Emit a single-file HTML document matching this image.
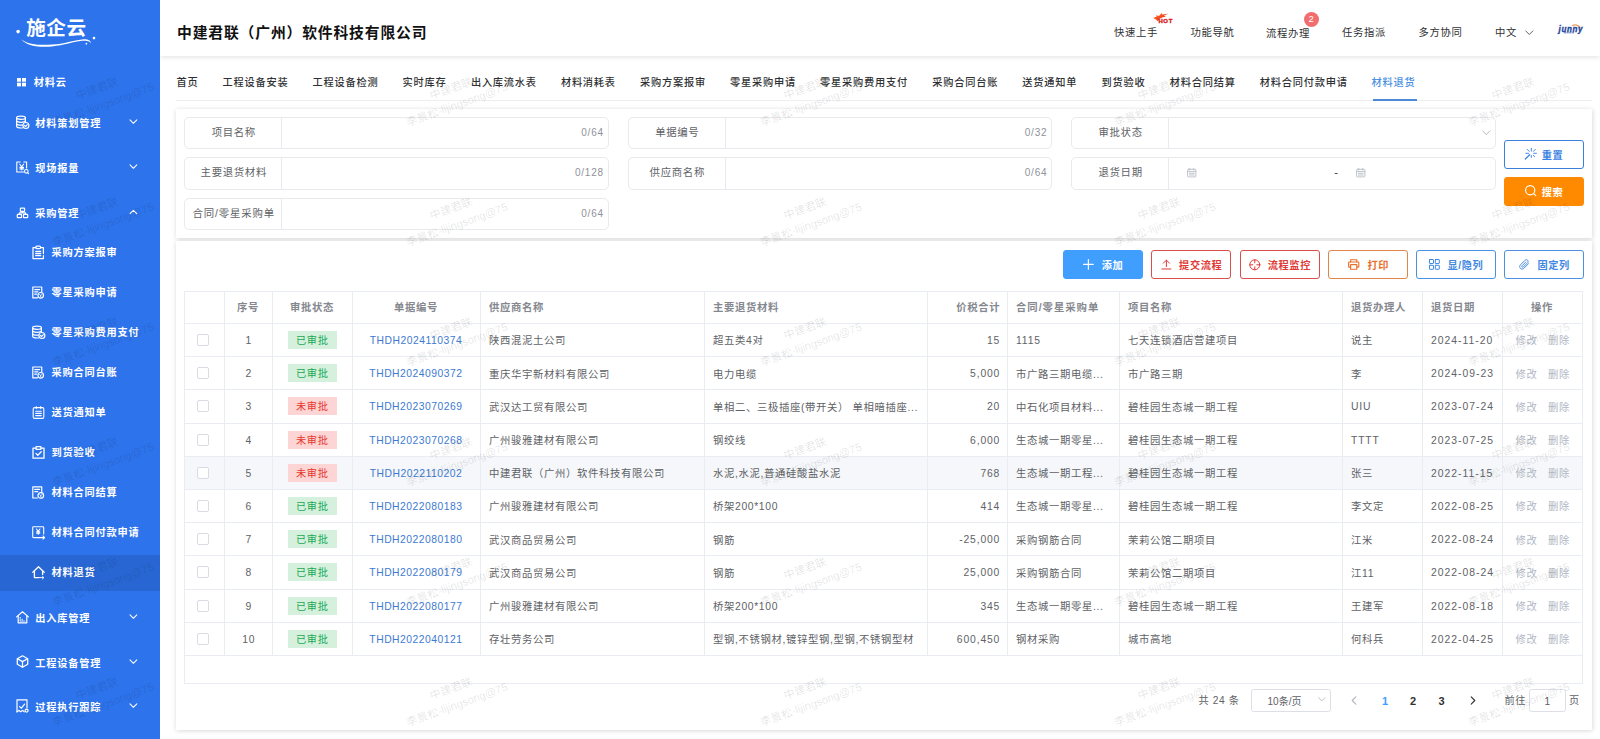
<!DOCTYPE html>
<html lang="zh-CN">
<head>
<meta charset="utf-8">
<title>材料退货</title>
<style>
*{box-sizing:border-box;margin:0;padding:0}
html,body{width:1600px;height:739px;overflow:hidden;background:#fff}
body{position:relative;font-family:"Liberation Sans","Noto Sans CJK SC",sans-serif;font-size:10.2px;letter-spacing:.63px;color:#606266;line-height:1}
.abs{position:absolute}
svg{display:block;overflow:visible}

/* ---------- sidebar ---------- */
#side{position:absolute;left:0;top:0;width:160px;height:739px;background:#2d73eb;overflow:hidden;color:#fff;font-weight:700;letter-spacing:.82px}
#side .it{position:absolute;left:0;width:160px;height:35px;line-height:36px;white-space:nowrap}
#side .it.on{background:#2867d3;height:36px}
#side .it svg{position:absolute}
#side .t0{position:absolute;left:33.8px}
#side .t1{position:absolute;left:35.3px}
#side .t2{position:absolute;left:51.5px}
#side svg.si{left:16px;top:10px}
#side svg.si2{left:32px;top:10.8px}
#side svg.ar{left:128.5px;top:13.5px}
#logo{position:absolute;left:0;top:0}

/* ---------- header ---------- */
#head{position:absolute;left:160px;top:0;width:1440px;height:56px;background:#fff;box-shadow:0 1px 5px rgba(0,21,41,.13)}
#title{position:absolute;left:17px;top:1px;height:64px;line-height:64px;font-size:14.8px;letter-spacing:.85px;font-weight:700;color:#111;white-space:nowrap}
.nav{position:absolute;height:65px;line-height:65px;font-size:10.35px;letter-spacing:.65px;color:#303133;white-space:nowrap}
#head svg{position:absolute}
#badge{position:absolute;left:1144px;top:12px;width:14.5px;height:14.5px;border-radius:8px;background:#f26d6d;color:#fff;font-size:9.5px;letter-spacing:0;line-height:14.5px;text-align:center}

/* ---------- tabs ---------- */
#tabs{position:absolute;left:176px;top:64px;width:1416px;height:37px;border-bottom:1px solid #edeef1;white-space:nowrap;font-weight:500;color:#303133;letter-spacing:.8px}
#tabs span{position:absolute;top:0;height:38.5px;line-height:38.5px}
#tabs span.on{color:#4a90e2}
#tabs i{position:absolute;top:34.8px;width:44.5px;height:2px;background:#4b8bd6}

/* ---------- cards ---------- */
.card{position:absolute;left:176px;width:1416px;background:#fff;box-shadow:0 1px 5px rgba(0,0,0,.13),2px 0 5px rgba(0,0,0,.04)}
#fcard{top:109px;height:128.5px}
#tcard{top:241px;height:489px}

.grp{position:absolute;width:424.5px;height:31px;border:1px solid #e9eaee;border-radius:5px;background:#fff}
.grp .lb{position:absolute;left:0;top:0;width:97px;height:29px;line-height:29px;text-align:center;border-right:1px solid #e9eaee;color:#606266;white-space:nowrap;font-size:10.4px;letter-spacing:.68px;text-indent:1.6px}
.grp .ct{position:absolute;right:3.6px;top:0;height:29px;line-height:29px;font-size:10px;color:#8f9299;letter-spacing:.8px}
.grp svg{position:absolute}
.grp .dash{position:absolute;left:262.5px;top:0;line-height:28px;color:#303133;font-size:11px}

.btn{position:absolute;width:80px;height:29px;border-radius:3px;border:1px solid;display:flex;align-items:center;justify-content:center;font-weight:700;white-space:nowrap;background:#fff}
.btn svg{margin-right:7.5px;flex:none}
.btn span{position:relative;top:1.2px;margin-right:-.63px}
.b-reset{border-color:#3a7fdc;color:#3a82e4}
.b-reset svg{margin-right:5px;position:relative;top:-1px}
.b-search{border-color:#ff8a00;background:#ff8a00;color:#fff}
.b-search svg{margin-right:5px;position:relative;top:-1.1px}
.b-add{border-color:#409eff;background:#409eff;color:#fff}
.b-red{border-color:#d9504b;color:#e03a35}
.b-org{border-color:#e08548;color:#e8722c}
.b-org svg{margin-right:8.5px;margin-left:.5px}
.b-blue{border-color:#4a90e2;color:#3f88e2}

/* ---------- table ---------- */
#tb{position:absolute;left:8px;top:50px;width:1399px;height:392.5px}
#tb .vl{position:absolute;top:0;width:1px;height:364px;background:#e9ecf3}
#tb .hl{position:absolute;left:0;width:1399px;height:1px;background:#e9ecf3}
#tb .row{position:absolute;left:0;width:1398px;height:33.2px}
#tb .row.hv{background:#f5f7fa}
#tb .c{position:absolute;top:0;height:100%;font-size:10.35px;letter-spacing:.65px;display:flex;align-items:center;white-space:nowrap;overflow:hidden;padding:2px 9px 0}
#tb .c.cr{padding-right:6.8px}
#tb .hd{font-weight:700;color:#85888f}
#tb .k{padding-top:3px}
#tb .hd .k{padding-top:2px}
#tb .n{letter-spacing:.85px}
#tb .d{letter-spacing:1px}
.cc{justify-content:center}
.cr{justify-content:flex-end}
.tag{display:inline-block;width:49px;height:18px;line-height:19.5px;margin-top:-2px;text-align:center;font-size:10.2px;letter-spacing:.63px;text-indent:.5px;font-weight:400}
.tg{background:#d5f1dd;color:#19a955}
.tr{background:#fdd5d5;color:#e8362c}
.lk{color:#3d7ad0;letter-spacing:.5px}
.op{color:#b0b7c4}
.cb{display:block;width:12px;height:12px;position:relative;left:-1px;top:-1px;border:1px solid #d9dce3;border-radius:2px;background:#fff}

/* ---------- pagination ---------- */
#tcard>svg{position:absolute}
.pg{position:absolute;top:449.2px;height:22px;line-height:22px;white-space:nowrap;color:#606266}
.pn{position:absolute;top:448.6px;width:20px;height:22px;line-height:22px;text-align:center;font-weight:700;font-size:11px;letter-spacing:0}
.pbox{position:absolute;top:448px;height:22.5px;border:1px solid #dcdfe6;border-radius:2.5px;line-height:23px;text-align:center;color:#606266;letter-spacing:0}
.pbox svg{position:absolute}

/* ---------- watermark ---------- */
.wm{position:absolute;width:180px;text-align:center;transform:rotate(-20deg);color:rgba(0,0,0,.115);font-size:11.1px;line-height:16.5px;height:33px;pointer-events:none;white-space:nowrap;font-weight:400;letter-spacing:0}

</style>
</head>
<body>
<div id="head">
<div id="title">中建君联（广州）软件科技有限公司</div>
<div class="nav" style="left:954px;top:0px">快速上手</div>
<div class="nav" style="left:1030.5px;top:0px">功能导航</div>
<div class="nav" style="left:1106px;top:1px">流程办理</div>
<div class="nav" style="left:1182px;top:0px">任务指派</div>
<div class="nav" style="left:1258.5px;top:0px">多方协同</div>
<div class="nav" style="left:1335px;top:0px">中文</div>
<svg style="left:990px;top:10px" width="26" height="15" viewBox="0 0 26 15"><defs><linearGradient id="hg" x1="0" y1="0" x2="1" y2="1"><stop offset="0" stop-color="#ff7a2e"/><stop offset="1" stop-color="#e81a0c"/></linearGradient></defs><path d="M3.260 7.890L6.700 6.400L6.100 5.200L9 5.900L11.660 3.120L12.300 4.600L18.150 3.770L13.900 5.700L15.990 6.640L12.700 7.200L9.600 8.800L7.870 11.240Q6.300 9.300 3.260 7.890Z" fill="url(#hg)"/><text x="8.400" y="12.950" textLength="14.600" lengthAdjust="spacingAndGlyphs" font-family="'Liberation Sans',sans-serif" font-weight="700" font-size="5.400" fill="#d8201e" stroke="#d8201e" stroke-width=".35">HOT</text></svg>
<div id="badge">2</div>
<svg style="left:1364.500px;top:29.500px" width="9" height="6" viewBox="0 0 9 6" fill="none" stroke="#606266" stroke-width="1" stroke-linecap="round" stroke-linejoin="round"><path d="M.7.900l3.600 3.600L7.900.9"/></svg>
<svg style="left:1396px;top:22px" width="30" height="14" viewBox="0 0 30 14"><path d="M16.500 3.600C19 2.200 22.500 3 24.200 5.900" fill="none" stroke="#ee9a5c" stroke-width="1.100" stroke-linecap="round"/><text x="2.600" y="9.800" textLength="24.400" lengthAdjust="spacingAndGlyphs" font-family="'Liberation Sans',sans-serif" font-weight="700" font-style="italic" font-size="8.600" fill="#23469a" stroke="#23469a" stroke-width=".35">junny</text><path d="M7.800 10.800h10.800" stroke="#3f62b0" stroke-width=".9" stroke-dasharray="2.200 .5" fill="none"/></svg>
</div>
<div id="tabs">
<span style="left:0.5px">首页</span>
<span style="left:46.6px">工程设备安装</span>
<span style="left:136.6px">工程设备检测</span>
<span style="left:226.6px">实时库存</span>
<span style="left:294.9px">出入库流水表</span>
<span style="left:384.9px">材料消耗表</span>
<span style="left:464.1px">采购方案报审</span>
<span style="left:554.1px">零星采购申请</span>
<span style="left:644.1px">零星采购费用支付</span>
<span style="left:756.3px">采购合同台账</span>
<span style="left:846.3px">送货通知单</span>
<span style="left:925.5px">到货验收</span>
<span style="left:993.8px">材料合同结算</span>
<span style="left:1083.8px">材料合同付款申请</span>
<span class="on" style="left:1195.5px">材料退货</span>
<i style="left:1196.5px"></i>
</div>
<div class="card" id="fcard">
<div class="grp" style="left:8px;top:8px;height:32px;width:424.5px"><div class="lb" style="height:30px;line-height:29px">项目名称</div><div class="ct">0/64</div></div>
<div class="grp" style="left:8px;top:48px;height:33px;width:424.5px"><div class="lb" style="height:31px;line-height:30px">主要退货材料</div><div class="ct">0/128</div></div>
<div class="grp" style="left:8px;top:89px;height:32px;width:424.5px"><div class="lb" style="height:30px;line-height:29px"><span style="letter-spacing:.85px">合同/零星采购单</span></div><div class="ct">0/64</div></div>
<div class="grp" style="left:451.5px;top:8px;height:32px;width:424.5px"><div class="lb" style="height:30px;line-height:29px">单据编号</div><div class="ct">0/32</div></div>
<div class="grp" style="left:451.5px;top:48px;height:33px;width:424.5px"><div class="lb" style="height:31px;line-height:30px">供应商名称</div><div class="ct">0/64</div></div>
<div class="grp" style="left:894.8px;top:8px;height:32px;width:425.7px"><div class="lb" style="height:30px;line-height:29px">审批状态</div><svg style="left:410px;top:11.800px" width="9" height="6" viewBox="0 0 9 6" fill="none" stroke="#b4b8c0" stroke-width="1" stroke-linecap="round" stroke-linejoin="round"><path d="M.7.900l3.600 3.600L7.900.9"/></svg></div>
<div class="grp" style="left:894.8px;top:48px;height:33px;width:425.7px"><div class="lb" style="height:31px;line-height:30px">退货日期</div><svg style="left:115.500px;top:9.500px" width="9.5" height="9.5" viewBox="0 0 9.5 9.5" fill="none" stroke="#b9bdc6" stroke-width="0.9" stroke-linecap="round" stroke-linejoin="round"><rect x=".6" y="1.300" width="8.300" height="7.600" rx=".8"/><path d="M.6 3.600h8.300M2.800.5v1.600M6.700.5v1.600M2.400 5.300h4.800M2.400 7h4.800" /></svg><div class="dash">-</div><svg style="left:284.500px;top:9.500px" width="9.5" height="9.5" viewBox="0 0 9.5 9.5" fill="none" stroke="#b9bdc6" stroke-width="0.9" stroke-linecap="round" stroke-linejoin="round"><rect x=".6" y="1.300" width="8.300" height="7.600" rx=".8"/><path d="M.6 3.600h8.300M2.800.5v1.600M6.700.5v1.600M2.400 5.300h4.800M2.400 7h4.800" /></svg></div>
<div class="btn b-reset" style="left:1328px;top:31px"><svg width="11.5" height="11.5" viewBox="0 0 11.5 11.5" fill="none" stroke="currentColor" stroke-width="1" stroke-linecap="round" stroke-linejoin="round"><path d="M.3 11l4.400-4.300" stroke-width="1.200"/><path d="M6.300.3v2.800M.9 5.300h2.800M8.700 5.300h2.700M2.200 1.400l2 2M10.400 1.400l-2 2M9.600 8.700L8.300 7.400M6.300 7.500v1.900" stroke-width=".95"/></svg><span>重置</span></div>
<div class="btn b-search" style="left:1328px;top:68px"><svg width="11.5" height="11.5" viewBox="0 0 11.5 11.5" fill="none" stroke="currentColor" stroke-width="1.15" stroke-linecap="round" stroke-linejoin="round"><circle cx="5.200" cy="5.200" r="4.600"/><path d="M8.600 8.600l2.200 2.100"/></svg><span>搜索</span></div>
</div>
<div class="card" id="tcard">
<div class="btn b-add" style="left:887px;top:9px"><svg width="10.8" height="10.8" viewBox="0 0 10.8 10.8" fill="none" stroke="currentColor" stroke-width="1.2" stroke-linecap="round" stroke-linejoin="round"><path d="M5.400.6v9.600M.6 5.400h9.600"/></svg><span>添加</span></div>
<div class="btn b-red" style="left:975.25px;top:9px"><svg width="10.8" height="10.8" viewBox="0 0 10.8 10.8" fill="none" stroke="currentColor" stroke-width="1" stroke-linecap="round" stroke-linejoin="round"><path d="M.9 10h9M5.400 7.600V1.200M2.300 4.200l3.100-3.100 3.100 3.100"/></svg><span>提交流程</span></div>
<div class="btn b-red" style="left:1063.5px;top:9px"><svg width="11.6" height="11.6" viewBox="0 0 11.6 11.6" fill="none" stroke="currentColor" stroke-width="1" stroke-linecap="round" stroke-linejoin="round"><circle cx="5.800" cy="5.800" r="5"/><path d="M5.800.8v3M5.800 7.800v3M.8 5.800h3M7.800 5.800h3"/></svg><span>流程监控</span></div>
<div class="btn b-org" style="left:1151.75px;top:9px"><svg width="11.4" height="11" viewBox="0 0 11.4 11" fill="none" stroke="currentColor" stroke-width="1.15" stroke-linecap="round" stroke-linejoin="round"><path d="M2.600 3V.7h6.200V3"/><path d="M2.600 8.200H1.200c-.4 0-.6-.3-.6-.6V3.700c0-.4.300-.7.600-.7h9c.4 0 .6.300.6.700v3.900c0 .3-.2.600-.6.600H8.800"/><rect x="2.600" y="5.600" width="6.200" height="4.700"/></svg><span>打印</span></div>
<div class="btn b-blue" style="left:1240px;top:9px"><svg width="10.8" height="10.8" viewBox="0 0 10.8 10.8" fill="none" stroke="currentColor" stroke-width="1" stroke-linecap="round" stroke-linejoin="round"><rect x=".5" y=".5" width="4" height="4" rx=".4"/><rect x="6.300" y=".5" width="4" height="4" rx=".4"/><rect x=".5" y="6.300" width="4" height="4" rx=".4"/><rect x="6.300" y="6.300" width="4" height="4" rx=".4"/></svg><span>显/隐列</span></div>
<div class="btn b-blue" style="left:1328.25px;top:9px"><svg width="10.8" height="10.8" viewBox="0 0 10.8 10.8" fill="none" stroke="currentColor" stroke-width="0.95" stroke-linecap="round" stroke-linejoin="round"><path d="M10.200 4.400L5.500 9.100c-1 1-2.600 1-3.500.1-1-1-.9-2.500 0-3.500L6.700 1c.7-.7 1.800-.7 2.500 0 .7.700.7 1.800 0 2.500L4.900 7.800c-.35.350-.9.350-1.250 0-.35-.35-.35-.9 0-1.250l3.700-3.700" transform="translate(-.6,.2)"/></svg><span>固定列</span></div>
<div id="tb">
<div class="row hd" style="top:0.5px;height:32px">
<div class="c cc k" style="left:0px;width:40px"></div>
<div class="c cc k" style="left:40px;width:48px">序号</div>
<div class="c cc k" style="left:88px;width:80px">审批状态</div>
<div class="c cc k" style="left:168px;width:128px">单据编号</div>
<div class="c  k" style="left:296px;width:224px">供应商名称</div>
<div class="c  k" style="left:520px;width:223px">主要退货材料</div>
<div class="c cr k" style="left:743px;width:80px">价税合计</div>
<div class="c  k" style="left:823px;width:112px"><span style="letter-spacing:1px">合同/零星采购单</span></div>
<div class="c  k" style="left:935px;width:223px">项目名称</div>
<div class="c  k" style="left:1158px;width:80px">退货办理人</div>
<div class="c  k" style="left:1238px;width:80px">退货日期</div>
<div class="c cc k" style="left:1318px;width:80px">操作</div>
</div>
<div class="row" style="top:32.5px">
<div class="c cc" style="left:0px;width:40px"><span class="cb"></span></div>
<div class="c cc n" style="left:40px;width:48px"><span style="margin-left:1.6px">1</span></div>
<div class="c cc" style="left:88px;width:80px"><span class="tag tg">已审批</span></div>
<div class="c cc" style="left:168px;width:128px"><span class="lk">THDH2024110374</span></div>
<div class="c k" style="left:296px;width:224px">陕西混泥土公司</div>
<div class="c k" style="left:520px;width:223px">超五类4对</div>
<div class="c cr n" style="left:743px;width:80px">15</div>
<div class="c n" style="left:823px;width:112px">1115</div>
<div class="c k" style="left:935px;width:223px">七天连锁酒店营建项目</div>
<div class="c k" style="left:1158px;width:80px">说主</div>
<div class="c d" style="left:1238px;width:80px">2024-11-20</div>
<div class="c cc k" style="left:1318px;width:80px"><span class="op" style="margin-left:1.5px">修改</span><span class="op" style="margin-left:10.6px">删除</span></div>
</div>
<div class="row" style="top:65.7px">
<div class="c cc" style="left:0px;width:40px"><span class="cb"></span></div>
<div class="c cc n" style="left:40px;width:48px"><span style="margin-left:1.6px">2</span></div>
<div class="c cc" style="left:88px;width:80px"><span class="tag tg">已审批</span></div>
<div class="c cc" style="left:168px;width:128px"><span class="lk">THDH2024090372</span></div>
<div class="c k" style="left:296px;width:224px">重庆华宇新材料有限公司</div>
<div class="c k" style="left:520px;width:223px">电力电缆</div>
<div class="c cr n" style="left:743px;width:80px">5,000</div>
<div class="c k" style="left:823px;width:112px">市广路三期电缆...</div>
<div class="c k" style="left:935px;width:223px">市广路三期</div>
<div class="c k" style="left:1158px;width:80px">李</div>
<div class="c d" style="left:1238px;width:80px">2024-09-23</div>
<div class="c cc k" style="left:1318px;width:80px"><span class="op" style="margin-left:1.5px">修改</span><span class="op" style="margin-left:10.6px">删除</span></div>
</div>
<div class="row" style="top:98.9px">
<div class="c cc" style="left:0px;width:40px"><span class="cb"></span></div>
<div class="c cc n" style="left:40px;width:48px"><span style="margin-left:1.6px">3</span></div>
<div class="c cc" style="left:88px;width:80px"><span class="tag tr">未审批</span></div>
<div class="c cc" style="left:168px;width:128px"><span class="lk">THDH2023070269</span></div>
<div class="c k" style="left:296px;width:224px">武汉达工贸有限公司</div>
<div class="c k" style="left:520px;width:223px">单相二、三极插座(带开关） 单相暗插座...</div>
<div class="c cr n" style="left:743px;width:80px">20</div>
<div class="c k" style="left:823px;width:112px">中石化项目材料...</div>
<div class="c k" style="left:935px;width:223px">碧桂园生态城一期工程</div>
<div class="c n" style="left:1158px;width:80px">UIU</div>
<div class="c d" style="left:1238px;width:80px">2023-07-24</div>
<div class="c cc k" style="left:1318px;width:80px"><span class="op" style="margin-left:1.5px">修改</span><span class="op" style="margin-left:10.6px">删除</span></div>
</div>
<div class="row" style="top:132.1px">
<div class="c cc" style="left:0px;width:40px"><span class="cb"></span></div>
<div class="c cc n" style="left:40px;width:48px"><span style="margin-left:1.6px">4</span></div>
<div class="c cc" style="left:88px;width:80px"><span class="tag tr">未审批</span></div>
<div class="c cc" style="left:168px;width:128px"><span class="lk">THDH2023070268</span></div>
<div class="c k" style="left:296px;width:224px">广州骏雅建材有限公司</div>
<div class="c k" style="left:520px;width:223px">钢绞线</div>
<div class="c cr n" style="left:743px;width:80px">6,000</div>
<div class="c k" style="left:823px;width:112px">生态城一期零星...</div>
<div class="c k" style="left:935px;width:223px">碧桂园生态城一期工程</div>
<div class="c n" style="left:1158px;width:80px">TTTT</div>
<div class="c d" style="left:1238px;width:80px">2023-07-25</div>
<div class="c cc k" style="left:1318px;width:80px"><span class="op" style="margin-left:1.5px">修改</span><span class="op" style="margin-left:10.6px">删除</span></div>
</div>
<div class="row hv" style="top:165.3px">
<div class="c cc" style="left:0px;width:40px"><span class="cb"></span></div>
<div class="c cc n" style="left:40px;width:48px"><span style="margin-left:1.6px">5</span></div>
<div class="c cc" style="left:88px;width:80px"><span class="tag tr">未审批</span></div>
<div class="c cc" style="left:168px;width:128px"><span class="lk">THDH2022110202</span></div>
<div class="c k" style="left:296px;width:224px">中建君联（广州）软件科技有限公司</div>
<div class="c k" style="left:520px;width:223px">水泥,水泥,普通硅酸盐水泥</div>
<div class="c cr n" style="left:743px;width:80px">768</div>
<div class="c k" style="left:823px;width:112px">生态城一期工程...</div>
<div class="c k" style="left:935px;width:223px">碧桂园生态城一期工程</div>
<div class="c k" style="left:1158px;width:80px">张三</div>
<div class="c d" style="left:1238px;width:80px">2022-11-15</div>
<div class="c cc k" style="left:1318px;width:80px"><span class="op" style="margin-left:1.5px">修改</span><span class="op" style="margin-left:10.6px">删除</span></div>
</div>
<div class="row" style="top:198.5px">
<div class="c cc" style="left:0px;width:40px"><span class="cb"></span></div>
<div class="c cc n" style="left:40px;width:48px"><span style="margin-left:1.6px">6</span></div>
<div class="c cc" style="left:88px;width:80px"><span class="tag tg">已审批</span></div>
<div class="c cc" style="left:168px;width:128px"><span class="lk">THDH2022080183</span></div>
<div class="c k" style="left:296px;width:224px">广州骏雅建材有限公司</div>
<div class="c k" style="left:520px;width:223px">桥架200*100</div>
<div class="c cr n" style="left:743px;width:80px">414</div>
<div class="c k" style="left:823px;width:112px">生态城一期零星...</div>
<div class="c k" style="left:935px;width:223px">碧桂园生态城一期工程</div>
<div class="c k" style="left:1158px;width:80px">李文定</div>
<div class="c d" style="left:1238px;width:80px">2022-08-25</div>
<div class="c cc k" style="left:1318px;width:80px"><span class="op" style="margin-left:1.5px">修改</span><span class="op" style="margin-left:10.6px">删除</span></div>
</div>
<div class="row" style="top:231.7px">
<div class="c cc" style="left:0px;width:40px"><span class="cb"></span></div>
<div class="c cc n" style="left:40px;width:48px"><span style="margin-left:1.6px">7</span></div>
<div class="c cc" style="left:88px;width:80px"><span class="tag tg">已审批</span></div>
<div class="c cc" style="left:168px;width:128px"><span class="lk">THDH2022080180</span></div>
<div class="c k" style="left:296px;width:224px">武汉商品贸易公司</div>
<div class="c k" style="left:520px;width:223px">钢筋</div>
<div class="c cr n" style="left:743px;width:80px">-25,000</div>
<div class="c k" style="left:823px;width:112px">采购钢筋合同</div>
<div class="c k" style="left:935px;width:223px">茉莉公馆二期项目</div>
<div class="c k" style="left:1158px;width:80px">江米</div>
<div class="c d" style="left:1238px;width:80px">2022-08-24</div>
<div class="c cc k" style="left:1318px;width:80px"><span class="op" style="margin-left:1.5px">修改</span><span class="op" style="margin-left:10.6px">删除</span></div>
</div>
<div class="row" style="top:264.9px">
<div class="c cc" style="left:0px;width:40px"><span class="cb"></span></div>
<div class="c cc n" style="left:40px;width:48px"><span style="margin-left:1.6px">8</span></div>
<div class="c cc" style="left:88px;width:80px"><span class="tag tg">已审批</span></div>
<div class="c cc" style="left:168px;width:128px"><span class="lk">THDH2022080179</span></div>
<div class="c k" style="left:296px;width:224px">武汉商品贸易公司</div>
<div class="c k" style="left:520px;width:223px">钢筋</div>
<div class="c cr n" style="left:743px;width:80px">25,000</div>
<div class="c k" style="left:823px;width:112px">采购钢筋合同</div>
<div class="c k" style="left:935px;width:223px">茉莉公馆二期项目</div>
<div class="c k" style="left:1158px;width:80px">江11</div>
<div class="c d" style="left:1238px;width:80px">2022-08-24</div>
<div class="c cc k" style="left:1318px;width:80px"><span class="op" style="margin-left:1.5px">修改</span><span class="op" style="margin-left:10.6px">删除</span></div>
</div>
<div class="row" style="top:298.1px">
<div class="c cc" style="left:0px;width:40px"><span class="cb"></span></div>
<div class="c cc n" style="left:40px;width:48px"><span style="margin-left:1.6px">9</span></div>
<div class="c cc" style="left:88px;width:80px"><span class="tag tg">已审批</span></div>
<div class="c cc" style="left:168px;width:128px"><span class="lk">THDH2022080177</span></div>
<div class="c k" style="left:296px;width:224px">广州骏雅建材有限公司</div>
<div class="c k" style="left:520px;width:223px">桥架200*100</div>
<div class="c cr n" style="left:743px;width:80px">345</div>
<div class="c k" style="left:823px;width:112px">生态城一期零星...</div>
<div class="c k" style="left:935px;width:223px">碧桂园生态城一期工程</div>
<div class="c k" style="left:1158px;width:80px">王建军</div>
<div class="c d" style="left:1238px;width:80px">2022-08-18</div>
<div class="c cc k" style="left:1318px;width:80px"><span class="op" style="margin-left:1.5px">修改</span><span class="op" style="margin-left:10.6px">删除</span></div>
</div>
<div class="row" style="top:331.3px">
<div class="c cc" style="left:0px;width:40px"><span class="cb"></span></div>
<div class="c cc n" style="left:40px;width:48px"><span style="margin-left:1.6px">10</span></div>
<div class="c cc" style="left:88px;width:80px"><span class="tag tg">已审批</span></div>
<div class="c cc" style="left:168px;width:128px"><span class="lk">THDH2022040121</span></div>
<div class="c k" style="left:296px;width:224px">存壮劳务公司</div>
<div class="c k" style="left:520px;width:223px">型钢,不锈钢材,镀锌型钢,型钢,不锈钢型材</div>
<div class="c cr n" style="left:743px;width:80px">600,450</div>
<div class="c k" style="left:823px;width:112px">钢材采购</div>
<div class="c k" style="left:935px;width:223px">城市高地</div>
<div class="c k" style="left:1158px;width:80px">何科兵</div>
<div class="c d" style="left:1238px;width:80px">2022-04-25</div>
<div class="c cc k" style="left:1318px;width:80px"><span class="op" style="margin-left:1.5px">修改</span><span class="op" style="margin-left:10.6px">删除</span></div>
</div>
<div class="hl" style="top:32.0px"></div>
<div class="hl" style="top:65.2px"></div>
<div class="hl" style="top:98.4px"></div>
<div class="hl" style="top:131.6px"></div>
<div class="hl" style="top:164.8px"></div>
<div class="hl" style="top:198.0px"></div>
<div class="hl" style="top:231.2px"></div>
<div class="hl" style="top:264.4px"></div>
<div class="hl" style="top:297.6px"></div>
<div class="hl" style="top:330.8px"></div>
<div class="hl" style="top:364.0px"></div>
<div class="hl" style="top:0"></div><div class="hl" style="top:391.5px"></div>
<div class="vl" style="left:40px"></div>
<div class="vl" style="left:88px"></div>
<div class="vl" style="left:168px"></div>
<div class="vl" style="left:296px"></div>
<div class="vl" style="left:520px"></div>
<div class="vl" style="left:743px"></div>
<div class="vl" style="left:823px"></div>
<div class="vl" style="left:935px"></div>
<div class="vl" style="left:1158px"></div>
<div class="vl" style="left:1238px"></div>
<div class="vl" style="left:1318px"></div>
<div class="vl" style="left:0;height:392px"></div><div class="vl" style="left:1398px;height:392px"></div>
</div>
<div class="pg" style="left:1022.5px">共 24 条</div>
<div class="pbox" style="left:1075px;width:80px;padding-right:13px;font-size:10px">10条/页<svg style="left:66px;top:7px" width="8" height="5" viewBox="0 0 8 5" fill="none" stroke="#b4b8c0" stroke-width="0.9" stroke-linecap="round" stroke-linejoin="round"><path d="M.6.700l3.200 3.200L7 .700"/></svg></div>
<svg style="left:1175px;top:455px" width="6" height="9" viewBox="0 0 6 9" fill="none" stroke="#b4b8c0" stroke-width="1.2" stroke-linecap="round" stroke-linejoin="round"><path d="M4.800.8L1.200 4.500l3.600 3.700"/></svg>
<div class="pn" style="left:1199px;color:#409eff">1</div>
<div class="pn" style="left:1227px;color:#303133">2</div>
<div class="pn" style="left:1255.5px;color:#303133">3</div>
<svg style="left:1294px;top:455px" width="6" height="9" viewBox="0 0 6 9" fill="none" stroke="#303133" stroke-width="1.1" stroke-linecap="round" stroke-linejoin="round"><path d="M1.200.8l3.600 3.700-3.600 3.700"/></svg>
<div class="pg" style="left:1328.5px">前往</div>
<div class="pbox" style="left:1353px;width:36.5px">1</div>
<div class="pg" style="left:1393px">页</div>
</div>
<div id="side">
<svg id="logo" width="160" height="60" viewBox="0 0 160 60"><text x="26.200" y="35.300" font-family="'Liberation Sans','Noto Sans CJK SC',sans-serif" font-weight="700" font-size="19.600" fill="#fff" style="letter-spacing:.55px">施企云</text><circle cx="18.100" cy="31.600" r="1.800" fill="#fff"/><circle cx="94" cy="38.100" r="1.300" fill="#fff"/><circle cx="86.400" cy="43.700" r=".85" fill="#fff"/><path d="M21.200 39.200C28 44.600 40 45.400 52 44.600C64 43.700 74 40.300 82 39.400C87.500 38.800 91.800 40.400 90.500 44C91 41.500 87.500 40.400 82 40.800C74 41.600 64 45.400 52 46.400C40 47.300 27 46.500 21.200 39.200Z" fill="#fff"/></svg>
<div class="it" style="top:64.5px"><svg style="left:16.8px;top:13px" width="9" height="9" viewBox="0 0 9 9" fill="#fff"><rect x="0" y="0" width="4" height="3.7"/><rect x="5" y="0" width="4" height="3.7"/><rect x="0" y="4.7" width="4" height="3.7"/><rect x="5" y="4.7" width="4" height="3.7"/></svg><span class="t0">材料云</span></div>
<div class="it" style="top:105.5px"><svg class="si" width="13" height="13" viewBox="0 0 13 13" fill="none" stroke="#fff" stroke-width="1.2" stroke-linecap="round" stroke-linejoin="round"><path d="M.6 1.700v8.600c0 .95 2 1.700 4.400 1.700.8 0 1.500-.08 2.200-.24"/><ellipse cx="5" cy="1.700" rx="4.400" ry="1.650"/><path d="M9.400 1.700v4.300"/><path d="M.6 4.600c0 .95 2 1.700 4.400 1.700s4.400-.75 4.400-1.700"/><path d="M.6 7.500c0 .95 2 1.700 4.400 1.700.6 0 1.200-.05 1.800-.15"/><circle cx="9.900" cy="9.500" r="3" fill="#2d73eb"/><path d="M8.500 9.500l1.050 1.050 1.800-1.900"/></svg><span class="t1">材料策划管理</span><svg class="ar" width="9" height="6" viewBox="0 0 9 6" fill="none" stroke="#fff" stroke-width="1.05" stroke-linecap="round" stroke-linejoin="round"><path d="M1 .9l3.400 3.400L7.800.9"/></svg></div>
<div class="it" style="top:150.5px"><svg class="si" width="13" height="13" viewBox="0 0 13 13" fill="none" stroke="#fff" stroke-width="1.1" stroke-linecap="round" stroke-linejoin="round"><path d="M4.200 1H.8v10h7M7.800 1h2.800v6"/><path d="M3.800 3.200l1.900 2.600 1.900-2.600M5.700 5.800v3.200M3.900 6.400h3.600M3.900 7.900h3.600"/><circle cx="10.300" cy="10.300" r="1.800"/><path d="M11.600 11.600l1 1"/></svg><span class="t1">现场报量</span><svg class="ar" width="9" height="6" viewBox="0 0 9 6" fill="none" stroke="#fff" stroke-width="1.05" stroke-linecap="round" stroke-linejoin="round"><path d="M1 .9l3.400 3.400L7.800.9"/></svg></div>
<div class="it" style="top:195.5px"><svg class="si" width="13" height="13" viewBox="0 0 13 13" fill="none" stroke="#fff" stroke-width="1.2" stroke-linecap="round" stroke-linejoin="round"><rect x="4.400" y="2.100" width="4.200" height="3.300" rx=".5"/><rect x="1.300" y="8.400" width="4.200" height="3.300" rx=".5"/><rect x="7.500" y="8.400" width="4.200" height="3.300" rx=".5"/><path d="M6.500 5.400v1.500M3.400 8.400V6.900h6.200v1.500"/></svg><span class="t1">采购管理</span><svg class="ar" width="9" height="6" viewBox="0 0 9 6" fill="none" stroke="#fff" stroke-width="1.05" stroke-linecap="round" stroke-linejoin="round"><path d="M1 4.700L4.400 1.300 7.800 4.700"/></svg></div>
<div class="it" style="top:235px"><svg class="si2" width="13" height="13" viewBox="0 0 13 13" fill="none" stroke="#fff" stroke-width="1.25" stroke-linecap="round" stroke-linejoin="round"><path d="M3.800 1.500H1v11h10.400V9.600M11.400 7.600V1.500H8.600"/><rect x="3.800" y=".2" width="4.800" height="2.300" rx="1"/><path d="M3.700 5.300h5M3.700 7.500h5M3.700 9.700h5" stroke-width="1.300"/></svg><span class="t2">采购方案报审</span></div>
<div class="it" style="top:275px"><svg class="si2" width="13" height="13" viewBox="0 0 13 13" fill="none" stroke="#fff" stroke-width="1.2" stroke-linecap="round" stroke-linejoin="round"><path d="M5.600 11.800H.8V1h8.950v4.800"/><path d="M2.800 3.600h4.800M2.800 5.900h3M2.800 8.200h1.800"/><circle cx="8.700" cy="9.300" r="2.800"/><path d="M7.700 8.500l1 1 1-1M8.700 9.500v1.300" stroke-width=".9"/></svg><span class="t2">零星采购申请</span></div>
<div class="it" style="top:315px"><svg class="si2" width="13" height="13" viewBox="0 0 13 13" fill="none" stroke="#fff" stroke-width="1.2" stroke-linecap="round" stroke-linejoin="round"><path d="M.6 1.700v8.600c0 .95 2 1.700 4.400 1.700.8 0 1.500-.08 2.200-.24"/><ellipse cx="5" cy="1.700" rx="4.400" ry="1.650"/><path d="M9.400 1.700v4.300"/><path d="M.6 4.600c0 .95 2 1.700 4.400 1.700s4.400-.75 4.400-1.700"/><path d="M.6 7.500c0 .95 2 1.700 4.400 1.700.6 0 1.200-.05 1.800-.15"/><circle cx="9.900" cy="9.500" r="3" fill="#2d73eb"/><path d="M8.500 9.500l1.050 1.050 1.800-1.900"/></svg><span class="t2">零星采购费用支付</span></div>
<div class="it" style="top:355px"><svg class="si2" width="13" height="13" viewBox="0 0 13 13" fill="none" stroke="#fff" stroke-width="1.2" stroke-linecap="round" stroke-linejoin="round"><path d="M5.600 11.800H.8V1h8.950v4.800"/><path d="M2.800 3.600h4.800M2.800 5.900h3M2.800 8.200h1.800"/><circle cx="8.700" cy="9.300" r="2.800"/><path d="M7.700 8.500l1 1 1-1M8.700 9.500v1.300" stroke-width=".9"/></svg><span class="t2">采购合同台账</span></div>
<div class="it" style="top:395px"><svg class="si2" width="13" height="13" viewBox="0 0 13 13" fill="none" stroke="#fff" stroke-width="1.1" stroke-linecap="round" stroke-linejoin="round"><rect x="1.200" y="1.600" width="10.600" height="10.800" rx="1.400"/><path d="M4.300.6v2M8.700.6v2M3.700 5.200h5.600M3.700 7.400h5.600M3.700 9.600h5.600"/></svg><span class="t2">送货通知单</span></div>
<div class="it" style="top:435px"><svg class="si2" width="13" height="13" viewBox="0 0 13 13" fill="none" stroke="#fff" stroke-width="1.3" stroke-linecap="round" stroke-linejoin="round"><path d="M4 2.200H1v10h11v-10H9"/><rect x="4" y=".6" width="5" height="2.800" rx=".5"/><path d="M3.900 7.400l1.900 1.900 3.400-3.600"/></svg><span class="t2">到货验收</span></div>
<div class="it" style="top:475px"><svg class="si2" width="13" height="13" viewBox="0 0 13 13" fill="none" stroke="#fff" stroke-width="1.2" stroke-linecap="round" stroke-linejoin="round"><path d="M5.600 12H.8V.8h8.950v5"/><path d="M2.800 3.400h4.800M2.800 5.700h3"/><circle cx="8.800" cy="9.400" r="2.800"/><path d="M7.800 8.600l1 1 1-1M8.800 9.600v1.300" stroke-width=".9"/></svg><span class="t2">材料合同结算</span></div>
<div class="it" style="top:515px"><svg class="si2" width="13" height="13" viewBox="0 0 13 13" fill="none" stroke="#fff" stroke-width="1.1" stroke-linecap="round" stroke-linejoin="round"><path d="M7 11.600H1.600c-.5 0-.9-.4-.9-.9V1.600c0-.5.400-.9.900-.9h9.200c.5 0 .9.400.9.900V8"/><path d="M4.500 3l1.700 2.300L7.900 3M6.200 5.300v3M4.600 5.800h3.200M4.600 7.100h3.200"/><path d="M6.500 11.600h6M11 10l1.600 1.600L11 13.200"/></svg><span class="t2">材料合同付款申请</span></div>
<div class="it on" style="top:555px"><svg class="si2" width="13" height="13" viewBox="0 0 13 13" fill="none" stroke="#fff" stroke-width="1.3" stroke-linecap="round" stroke-linejoin="round"><path d="M.8 6.200L6.500.8l5.700 5.400"/><path d="M2.400 5v6.600h4.200M10.600 5v3.400"/><path d="M6.600 11.600h5M10.400 10.200l1.400 1.400-1.400 1.400" stroke-width=".9"/></svg><span class="t2">材料退货</span></div>
<div class="it" style="top:600.8px"><svg class="si" style="top:9.5px" width="13" height="13" viewBox="0 0 13 13" fill="none" transform="translate(0,1.1)" stroke="#fff" stroke-width="1.2" stroke-linecap="round" stroke-linejoin="round"><path d="M.6 5.800L6.500.7l5.900 5.100"/><path d="M2.200 4.800v6.900h8.600V4.800"/><path d="M4.200 6.500v3.400M4.200 9.900h4.600M6.200 8.200v1.700" stroke-dasharray=".1 1.400"/></svg><span class="t1">出入库管理</span><svg class="ar" style="top:12.8px" width="9" height="6" viewBox="0 0 9 6" fill="none" stroke="#fff" stroke-width="1.05" stroke-linecap="round" stroke-linejoin="round"><path d="M1 .9l3.400 3.400L7.800.9"/></svg></div>
<div class="it" style="top:645.8px"><svg class="si" style="top:9.5px" width="13" height="13" viewBox="0 0 13 13" fill="none" stroke="#fff" stroke-width="1.3" stroke-linecap="round" stroke-linejoin="round"><path d="M6.500.8l5.200 2.900v5.600L6.500 12.200 1.300 9.300V3.700z"/><path d="M1.500 3.800l5 2.800 5-2.800M6.500 6.600v5.400"/></svg><span class="t1">工程设备管理</span><svg class="ar" style="top:12.8px" width="9" height="6" viewBox="0 0 9 6" fill="none" stroke="#fff" stroke-width="1.05" stroke-linecap="round" stroke-linejoin="round"><path d="M1 .9l3.400 3.400L7.800.9"/></svg></div>
<div class="it" style="top:689.8px"><svg class="si" style="top:9.5px" width="13" height="14" viewBox="0 0 13 14" fill="none" stroke="#fff" stroke-width="1.2" stroke-linecap="round" stroke-linejoin="round"><path d="M1 12.800V.8h10v8"/><path d="M3.600 7.600l1.800 1.600 3.200-4"/><path d="M1 12.800l2-1.400 1.600 1.400 2-1.400 1.600 1.400"/><circle cx="10.600" cy="11.600" r="1.500"/></svg><span class="t1">过程执行跟踪</span><svg class="ar" style="top:12.8px" width="9" height="6" viewBox="0 0 9 6" fill="none" stroke="#fff" stroke-width="1.05" stroke-linecap="round" stroke-linejoin="round"><path d="M1 .9l3.400 3.400L7.800.9"/></svg></div>
</div>
<div class="wm" style="left:10.3px;top:80.0px">中建君联<br>李景松-lijingsong@75</div>
<div class="wm" style="left:364.3px;top:80.0px">中建君联<br>李景松-lijingsong@75</div>
<div class="wm" style="left:718.3px;top:80.0px">中建君联<br>李景松-lijingsong@75</div>
<div class="wm" style="left:1072.3px;top:80.0px">中建君联<br>李景松-lijingsong@75</div>
<div class="wm" style="left:1426.3px;top:80.0px">中建君联<br>李景松-lijingsong@75</div>
<div class="wm" style="left:10.3px;top:200.0px">中建君联<br>李景松-lijingsong@75</div>
<div class="wm" style="left:364.3px;top:200.0px">中建君联<br>李景松-lijingsong@75</div>
<div class="wm" style="left:718.3px;top:200.0px">中建君联<br>李景松-lijingsong@75</div>
<div class="wm" style="left:1072.3px;top:200.0px">中建君联<br>李景松-lijingsong@75</div>
<div class="wm" style="left:1426.3px;top:200.0px">中建君联<br>李景松-lijingsong@75</div>
<div class="wm" style="left:10.3px;top:320.0px">中建君联<br>李景松-lijingsong@75</div>
<div class="wm" style="left:364.3px;top:320.0px">中建君联<br>李景松-lijingsong@75</div>
<div class="wm" style="left:718.3px;top:320.0px">中建君联<br>李景松-lijingsong@75</div>
<div class="wm" style="left:1072.3px;top:320.0px">中建君联<br>李景松-lijingsong@75</div>
<div class="wm" style="left:1426.3px;top:320.0px">中建君联<br>李景松-lijingsong@75</div>
<div class="wm" style="left:10.3px;top:440.0px">中建君联<br>李景松-lijingsong@75</div>
<div class="wm" style="left:364.3px;top:440.0px">中建君联<br>李景松-lijingsong@75</div>
<div class="wm" style="left:718.3px;top:440.0px">中建君联<br>李景松-lijingsong@75</div>
<div class="wm" style="left:1072.3px;top:440.0px">中建君联<br>李景松-lijingsong@75</div>
<div class="wm" style="left:1426.3px;top:440.0px">中建君联<br>李景松-lijingsong@75</div>
<div class="wm" style="left:10.3px;top:560.0px">中建君联<br>李景松-lijingsong@75</div>
<div class="wm" style="left:364.3px;top:560.0px">中建君联<br>李景松-lijingsong@75</div>
<div class="wm" style="left:718.3px;top:560.0px">中建君联<br>李景松-lijingsong@75</div>
<div class="wm" style="left:1072.3px;top:560.0px">中建君联<br>李景松-lijingsong@75</div>
<div class="wm" style="left:1426.3px;top:560.0px">中建君联<br>李景松-lijingsong@75</div>
<div class="wm" style="left:10.3px;top:680.0px">中建君联<br>李景松-lijingsong@75</div>
<div class="wm" style="left:364.3px;top:680.0px">中建君联<br>李景松-lijingsong@75</div>
<div class="wm" style="left:718.3px;top:680.0px">中建君联<br>李景松-lijingsong@75</div>
<div class="wm" style="left:1072.3px;top:680.0px">中建君联<br>李景松-lijingsong@75</div>
<div class="wm" style="left:1426.3px;top:680.0px">中建君联<br>李景松-lijingsong@75</div>
</body>
</html>
